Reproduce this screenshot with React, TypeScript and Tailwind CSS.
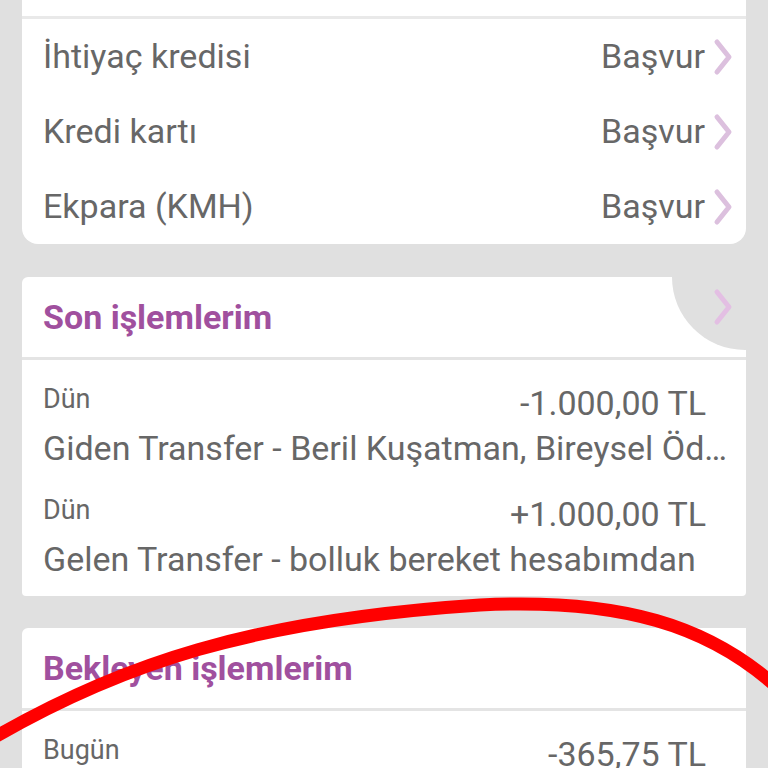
import React from 'react';

const gray = 'text-[#676767]';

function Chevron({ className }: { className: string }) {
    return (
        <svg width="22" height="38" viewBox="0 0 22 38" className={className}>
            <path d="M5 4 L17 19 L5 34" fill="none" stroke="currentColor" strokeWidth="5" strokeLinecap="round" strokeLinejoin="round" />
        </svg>
    );
}

function ApplyRow({ label }: { label: string }) {
    return (
        <div className="h-[75px] flex items-center justify-between pl-[21px] pr-[12px]">
            <span className={`text-[34px] ${gray}`}>{label}</span>
            <div className="flex items-center gap-[7px]">
                <span className={`text-[34px] ${gray}`}>Başvur</span>
                <Chevron className="text-[#dcc0de]" />
            </div>
        </div>
    );
}

function TxItem({ day, amount, text }: { day: string; amount: string; text: string }) {
    return (
        <div>
            <div className="flex justify-between">
                <span className={`text-[27px] leading-[36px] ${gray}`}>{day}</span>
                <span className={`text-[34px] leading-[44px] mr-[24px] ${gray}`}>{amount}</span>
            </div>
            <div className={`text-[34px] leading-[46px] truncate ${gray}`}>{text}</div>
        </div>
    );
}

function SectionHeader({ title, notch }: { title: string; notch?: boolean }) {
    return (
        <div className="relative h-[80px] bg-white rounded-tl-[6px] overflow-hidden flex items-center px-[21px]">
            <span className="text-[34px] font-bold text-[#a0509e]">{title}</span>
            {notch && (
                <>
                    <div className="absolute left-[650px] -top-[73px] w-[146px] h-[146px] rounded-full bg-[#e0e0e0]" />
                    <Chevron className="absolute left-[690px] top-[11px] text-[#e3bfe3]" />
                </>
            )}
        </div>
    );
}

export default function App() {
    return (
        <div
            className="relative w-[768px] h-[768px] overflow-hidden bg-[#e0e0e0] px-[22px]"
            style={{ fontFamily: 'Roboto, "Noto Sans", sans-serif' }}
        >
            <div className="h-[16px] bg-white" />
            <div className="h-[3px] bg-[#e9e9e9]" />
            <div className="bg-white rounded-b-[16px]">
                <ApplyRow label="İhtiyaç kredisi" />
                <ApplyRow label="Kredi kartı" />
                <ApplyRow label="Ekpara (KMH)" />
            </div>

            <div className="mt-[33px]">
                <SectionHeader title="Son işlemlerim" notch />
                <div className="h-[3px] bg-[#e4e4e4]" />
                <div className="bg-white rounded-b-[4px] pl-[21px] pr-[16px] pt-[21px] pb-[14px] flex flex-col gap-[21px]">
                    <TxItem day="Dün" amount="-1.000,00 TL" text="Giden Transfer - Beril Kuşatman, Bireysel Ödeme" />
                    <TxItem day="Dün" amount="+1.000,00 TL" text="Gelen Transfer - bolluk bereket hesabımdan" />
                </div>
            </div>

            <div className="mt-[32px]">
                <SectionHeader title="Bekleyen işlemlerim" />
                <div className="h-[3px] bg-[#e4e4e4]" />
                <div className="bg-white pl-[21px] pr-[16px] pt-[21px] pb-[14px] flex flex-col gap-[21px]">
                    <TxItem day="Bugün" amount="-365,75 TL" text="Kartlı işlem" />
                </div>
            </div>

            <svg className="absolute inset-0 pointer-events-none" width="768" height="768" viewBox="0 0 768 768">
                <path
                    d="M-5 737 C120 665 250 620 480 605 C620 598 710 625 780 690"
                    fill="none"
                    stroke="#ff0000"
                    strokeWidth="13"
                    strokeLinecap="round"
                />
            </svg>
        </div>
    );
}
